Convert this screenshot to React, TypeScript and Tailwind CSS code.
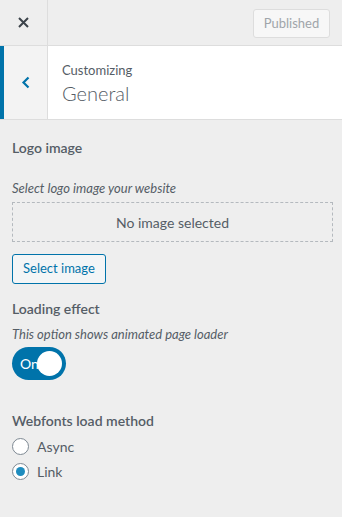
import React from "react";

const font = { fontFamily: "'Segoe UI', Lato, 'Open Sans', sans-serif" };

const App = () => {
    return (
        <div className="w-[342px] h-[517px] bg-[#eeeeee] text-[#555d66] overflow-hidden" style={font}>
            {/* top bar */}
            <div className="h-[46px] flex border-b border-[#dddddd] bg-[#eeeeee]">
                <button className="w-[48px] h-full flex items-center justify-center border-r border-[#dddddd] text-[#444]">
                    <svg width="11" height="11" viewBox="0 0 11 11">
                        <path d="M1 1L10 10M10 1L1 10" stroke="#3c434a" strokeWidth="2" />
                    </svg>
                </button>
                <div className="flex-1 flex items-center justify-end pr-[12px] pt-[2px]">
                    <div className="h-[29px] w-[77px] flex items-center justify-center border border-[#dddddd] bg-[#f7f7f7] rounded-[3px] text-[13px] text-[#a0a5aa]">
                        Published
                    </div>
                </div>
            </div>

            {/* section title */}
            <div className="h-[74px] flex bg-white border-b border-[#dddddd]">
                <div className="w-[48px] flex items-center justify-center bg-[#f3f3f3] border-l-4 border-[#0073aa] border-r border-r-[#dddddd]">
                    <svg width="10" height="13" viewBox="0 0 10 13">
                        <path d="M7.5 1.5L2.5 6.5L7.5 11.5" stroke="#0073aa" strokeWidth="2.2" fill="none" />
                    </svg>
                </div>
                <div className="flex flex-col justify-center pl-[14px] pt-[2px]">
                    <span className="text-[13px] leading-[18px]">Customizing</span>
                    <span className="text-[20px] leading-[28px] font-light text-[#555d66]">General</span>
                </div>
            </div>

            <div className="pl-[12px] pr-[9px] pt-[19px]">
                <div className="text-[14px] font-semibold leading-[18px]">Logo image</div>
                <div className="mt-[22px] text-[13px] italic leading-[18px]">Select logo image your website</div>
                <div className="mt-[5px] h-[40px] border border-dashed border-[#b4b9be] flex items-center justify-center text-[14px]">
                    No image selected
                </div>
                <button className="mt-[12px] h-[30px] px-[10px] rounded-[3px] border border-[#0073aa] bg-[#f3f5f6] text-[#0073aa] text-[13px] flex items-center">
                    Select image
                </button>

                <div className="mt-[16px] text-[14px] font-semibold leading-[18px]">Loading effect</div>
                <div className="mt-[7px] text-[13px] italic leading-[18px]">This option shows animated page loader</div>
                <div className="mt-[4px] relative w-[54px] h-[33px] rounded-full bg-[#0073aa] flex items-center">
                    <span className="pl-[8px] text-white text-[14px]">On</span>
                    <span className="absolute right-[4px] top-[4px] w-[25px] h-[25px] rounded-full bg-white" />
                </div>

                <div className="mt-[32px] text-[14px] font-semibold leading-[18px]">Webfonts load method</div>
                <div className="mt-[8px] flex flex-col gap-[8px] text-[14px]">
                    <label className="flex items-center gap-[8px] leading-[16px]">
                        <span className="w-[17px] h-[17px] rounded-full border border-[#7e8993] bg-white" />
                        Async
                    </label>
                    <label className="flex items-center gap-[8px] leading-[16px]">
                        <span className="w-[17px] h-[17px] rounded-full border border-[#7e8993] bg-white flex items-center justify-center">
                            <span className="w-[9px] h-[9px] rounded-full bg-[#1e8cbe]" />
                        </span>
                        Link
                    </label>
                </div>
            </div>
        </div>
    );
};

export default App;
